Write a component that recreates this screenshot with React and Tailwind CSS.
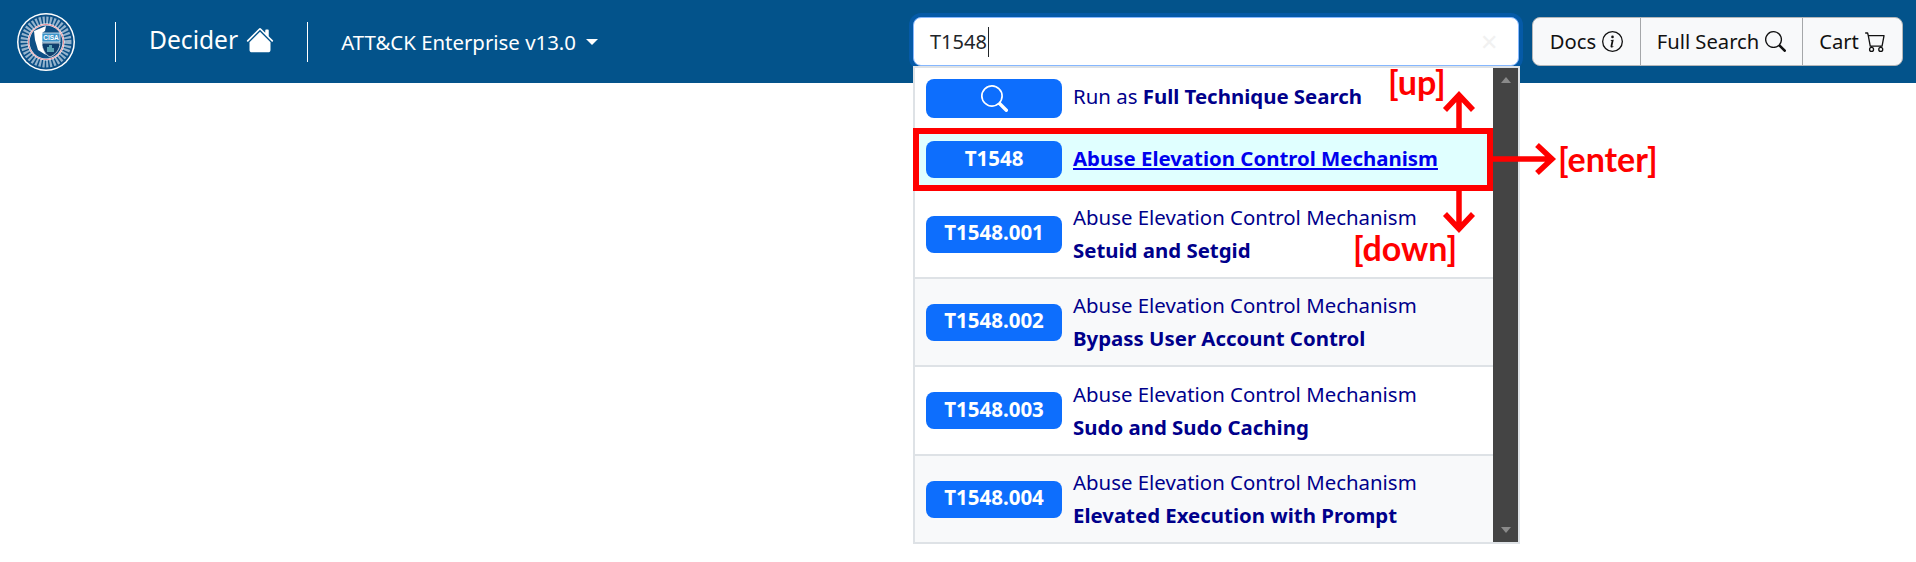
import React from 'react';
import { BsCart, BsHouseFill, BsInfoCircle, BsSearch } from 'react-icons/bs';

const results = [
  { id: 'T1548.001', name: 'Setuid and Setgid', rowClass: 'h-[88px] bg-white' },
  { id: 'T1548.002', name: 'Bypass User Account Control', rowClass: 'h-[88px] bg-[#f8f9fa]' },
  { id: 'T1548.003', name: 'Sudo and Sudo Caching', rowClass: 'h-[89px] bg-white' },
  { id: 'T1548.004', name: 'Elevated Execution with Prompt', rowClass: 'h-[88px] bg-[#f8f9fa]' },
];

const Seal = () => (
  <svg width="60" height="60" viewBox="0 0 60 60" className="shrink-0">
    <circle cx="30" cy="30" r="29" fill="#fff" />
    <circle cx="30" cy="30" r="27.5" fill="#0b4f86" />
    <circle cx="30" cy="30" r="21" fill="none" stroke="#dfe9f2" strokeWidth="9" strokeDasharray="2 1.4" opacity="0.65" />
    <circle cx="30" cy="30" r="18.5" fill="#fff" />
    <circle cx="30" cy="30" r="17.5" fill="none" stroke="#e58b98" strokeWidth="1" />
    <circle cx="30" cy="30" r="16.5" fill="#0e4f85" />
    <path d="M18 19 L30 14 L29 19 L26 21 L26 34 L30 43 L22 38 L19 28 Z" fill="#fff" />
    <rect x="26" y="21" width="18" height="9" fill="#3c93c9" stroke="#fff" strokeWidth="0.7" />
    <text x="35" y="28" textAnchor="middle" fontSize="6.5" fontWeight="700" fill="#fff" fontFamily="Liberation Sans, sans-serif">CISA</text>
    <path d="M26 31 H44 C44 38 39 43 34 45 C30 43 26 38 26 31 Z" fill="#0f3f6e" stroke="#fff" strokeWidth="0.7" />
    <path d="M31 40 V35 H33 V33 H36 V36 H38 V40 Z" fill="#5aa3b5" />
  </svg>
);

const Badge = ({ children }) => (
  <div className="flex h-[37px] w-[136px] shrink-0 items-center justify-center rounded-lg bg-[#0d6efd] pb-[3px] text-[20.5px] font-bold text-white">
    {children}
  </div>
);

const NavButton = ({ label, icon, className }) => (
  <div className={`flex h-full items-center gap-[6px] text-[20.2px] text-[#111] ${className}`}>
    {label}
    {icon}
  </div>
);

const App = () => {
  return (
    <div className="relative h-[562px] overflow-hidden bg-white font-['Noto_Sans',sans-serif]">
      <nav className="flex h-[83px] items-center bg-[#03538b] text-white">
        <div className="ml-[16px] flex items-center">
          <Seal />
        </div>
        <div className="ml-[39px] h-[40px] w-px bg-white" />
        <div className="ml-[33px] mb-[3px] flex items-center text-[24.6px]">
          Decider
          <BsHouseFill className="ml-[8px] text-[28px]" />
        </div>
        <div className="ml-[33px] h-[40px] w-px bg-white" />
        <div className="ml-[33px] mt-[1px] flex items-center text-[20.4px]">
          ATT&amp;CK Enterprise v13.0
          <span className="ml-[10px] border-x-[6.5px] border-t-[6.5px] border-x-transparent border-t-white" />
        </div>
        <div className="ml-auto flex h-[49px] items-center">
          <div className="flex h-[49px] w-[606px] items-center rounded-lg border border-[#86b7fe] bg-white pl-[16px] pr-[20px] text-[20px] text-[#212529] shadow-[0_0_0_4px_rgba(13,110,253,0.25)]">
            T1548
            <span className="ml-px h-[30px] w-px bg-[#212529]" />
            <span className="ml-auto text-[22px] text-[#f1f1f1]">✕</span>
          </div>
          <div className="ml-[13px] mr-[13px] flex h-[49px] w-[371px] rounded-lg border border-[#b5b7b9] bg-[#f8f9fa]">
            <NavButton label="Docs" icon={<BsInfoCircle className="text-[21px]" />} className="w-[108px] justify-center border-r border-[#a5a7a9]" />
            <NavButton label="Full Search" icon={<BsSearch className="text-[21px]" />} className="w-[162px] justify-center border-r border-[#a5a7a9]" />
            <NavButton label="Cart" icon={<BsCart className="text-[21px]" />} className="flex-1 justify-center" />
          </div>
        </div>
      </nav>

      {/* dropdown under the search box */}
      <div className="absolute left-[913px] top-[66px] flex h-[478px] w-[607px] border-2 border-[#dee2e6] bg-white text-[20.4px] text-[#00008b]">
        <div className="min-w-0 flex-1">
          <div className="flex h-[60px] items-center gap-[11px] pl-[11px]">
            <div className="flex h-[39px] w-[136px] shrink-0 items-center justify-center rounded-lg bg-[#0d6efd] text-white">
              <BsSearch className="text-[27px]" />
            </div>
            <span className="-mt-[3px]">
              Run as <b>Full Technique Search</b>
            </span>
          </div>
          <div className="ml-[-2px] flex h-[63px] items-center gap-[11px] border-[6px] border-[#ff0000] bg-[#e0ffff] pl-[7px]">
            <Badge>T1548</Badge>
            <span className="-mt-[2px] font-bold text-[#0000ee] underline">Abuse Elevation Control Mechanism</span>
          </div>
          {results.map((r) => (
            <div key={r.id} className={`flex items-center gap-[11px] border-b-2 border-[#dee2e6] pl-[11px] ${r.rowClass}`}>
              <Badge>{r.id}</Badge>
              <div className="leading-[33px]">
                <div>Abuse Elevation Control Mechanism</div>
                <div className="font-bold">{r.name}</div>
              </div>
            </div>
          ))}
        </div>
        <div className="flex w-[25px] shrink-0 flex-col items-center justify-between bg-[#444444] py-[9px]">
          <span className="border-x-[5.5px] border-b-[6px] border-x-transparent border-b-[#8a8a8a]" />
          <span className="border-x-[5.5px] border-t-[6px] border-x-transparent border-t-[#8a8a8a]" />
        </div>
      </div>

      {/* key annotations */}
      <svg width="1916" height="562" className="pointer-events-none absolute left-0 top-0">
        <g fill="none" stroke="#ff0000" strokeWidth="5.5">
          <path d="M1459 129 V95 M1445 110 L1459 95 L1473 110" />
          <path d="M1459 191 V229 M1445 214 L1459 229 L1473 214" />
          <path d="M1493 159 H1552 M1537 145 L1552 159 L1537 173" />
        </g>
      </svg>
      <span className="absolute left-[1388px] top-[62px] font-['Lato',sans-serif] text-[34px] font-bold leading-[40px] text-[#ff0000]">[up]</span>
      <span className="absolute left-[1558px] top-[139px] font-['Lato',sans-serif] text-[34px] font-bold leading-[40px] text-[#ff0000]">[enter]</span>
      <span className="absolute left-[1353px] top-[228px] font-['Lato',sans-serif] text-[34px] font-bold leading-[40px] text-[#ff0000]">[down]</span>
    </div>
  );
};

export default App;
